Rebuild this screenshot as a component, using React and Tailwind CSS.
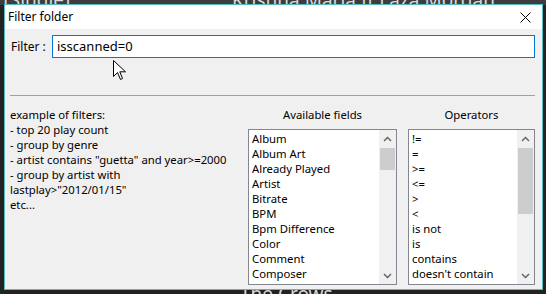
import React from "react";

const fields = ["Album", "Album Art", "Already Played", "Artist", "Bitrate", "BPM", "Bpm Difference", "Color", "Comment", "Composer"];
const operators = ["!=", "=", ">=", "<=", ">", "<", "is not", "is", "contains", "doesn't contain"];

const examples = [
  "example of filters:",
  "- top 20 play count",
  "- group by genre",
  '- artist contains "guetta" and year>=2000',
  "- group by artist with",
  'lastplay>"2012/01/15"',
  "etc...",
];

const Chevron = ({ up }) => (
  <svg width="9" height="6" viewBox="0 0 9 6" className="block">
    <path d={up ? "M1 5 L4.5 1.5 L8 5" : "M1 1 L4.5 4.5 L8 1"} fill="none" stroke="#606060" strokeWidth="1.4" />
  </svg>
);

const ListBox = ({ items, width, thumbHeight }) => (
  <div className={`flex h-[156px] ${width} border border-[#828790] bg-white`}>
    <ul className="flex-1 pl-[3px] pt-[1px] overflow-hidden">
      {items.map((item) => (
        <li key={item} className="h-[15px] leading-[15px] whitespace-nowrap">{item}</li>
      ))}
    </ul>
    <div className="flex w-[17px] flex-col bg-[#f0f0f0]">
      <div className="flex h-[17px] items-center justify-center"><Chevron up /></div>
      <div className="flex-1">
        <div className={`mt-[1px] ${thumbHeight} mx-[1px] bg-[#cdcdcd]`} />
      </div>
      <div className="flex h-[17px] items-center justify-center"><Chevron /></div>
    </div>
  </div>
);

export default function App() {
  return (
    <div className="relative h-[294px] w-[546px] overflow-hidden bg-[#222222] text-[11.3px] text-black" style={{ fontFamily: '"Noto Sans", "Open Sans", sans-serif' }}>
      {/* app content behind the dialog */}
      <div className="h-[5px] bg-[#3d3d3d]" />
      <div className="absolute left-[4px] top-[-14px] text-[19px] text-[#d8d8d8]">(Single)</div>
      <div className="absolute left-[232px] top-[-14px] text-[19px] text-[#d8d8d8]">Kristina Maria ft Laza Morgan</div>
      <div className="absolute left-[240px] top-[280px] text-[19px] text-[#d8d8d8]">The Crows</div>

      {/* dialog */}
      <div className="absolute left-[4px] top-[4px] flex h-[286px] w-[539px] flex-col border border-[#55bcc6] bg-[#f0f0f0]">
        <div className="flex h-[24px] items-center justify-between bg-white pl-[3px] pr-[11px] text-[12px]">
          <span>Filter folder</span>
          <svg width="11" height="11" viewBox="0 0 11 11">
            <path d="M0.5 0.5 L10.5 10.5 M10.5 0.5 L0.5 10.5" stroke="#000" strokeWidth="1" />
          </svg>
        </div>

        <div className="flex flex-col pl-[5px] pr-[7px] pt-[6px]">
          <div className="flex items-center">
            <span className="w-[42px] pl-[1px] text-[12px]">Filter :</span>
            <div className="flex h-[23px] flex-1 items-center border border-[#0078d7] bg-white pl-[4px] text-[13px]">isscanned=0</div>
          </div>

          <div className="mt-[37px] h-[2px] border-t border-[#a0a0a0] border-b-white" />

          <div className="mt-[10px] flex">
            <div className="flex-1">
              {examples.map((line) => (
                <div key={line} className="h-[15px] leading-[15px] whitespace-nowrap">{line}</div>
              ))}
            </div>
            <div className="flex flex-col items-center">
              <div className="h-[22px] leading-[15px]">Available fields</div>
              <ListBox items={fields} width="w-[149px]" thumbHeight="h-[22px]" />
            </div>
            <div className="ml-[11px] flex flex-col items-center">
              <div className="h-[22px] leading-[15px]">Operators</div>
              <ListBox items={operators} width="w-[127px]" thumbHeight="h-[66px]" />
            </div>
          </div>
        </div>
      </div>

      {/* mouse pointer */}
      <svg className="absolute left-[113px] top-[60px]" width="14" height="21" viewBox="0 0 14 21">
        <path d="M0.5 0.5 L0.5 16.5 L4.5 12.5 L7.5 19.5 L9.5 18.5 L6.8 11.8 L12.5 11.8 Z" fill="#fff" stroke="#000" strokeWidth="1" strokeLinejoin="miter" />
      </svg>
    </div>
  );
}
